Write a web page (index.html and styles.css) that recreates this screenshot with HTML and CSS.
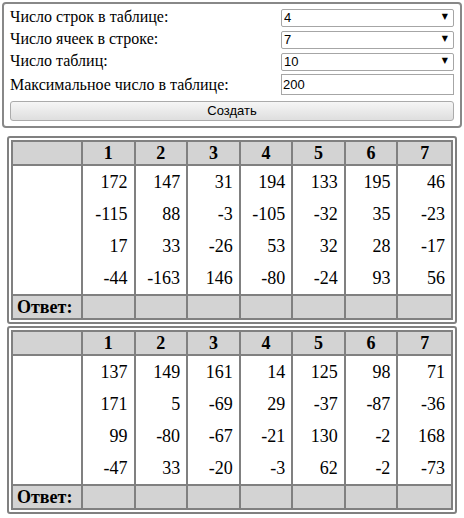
FILE: index.html
```html
<!DOCTYPE html>
<html lang="ru">
<head>
<meta charset="utf-8">
<title>Таблицы</title>
<link rel="stylesheet" href="styles.css">
</head>
<body>
<div class="form-panel">
  <label class="lbl">Число строк в таблице:</label>
  <div class="select-wrap"><select class="sel"><option>4</option></select></div>
  <label class="lbl">Число ячеек в строке:</label>
  <div class="select-wrap"><select class="sel"><option>7</option></select></div>
  <label class="lbl">Число таблиц:</label>
  <div class="select-wrap"><select class="sel"><option>10</option></select></div>
  <label class="lbl">Максимальное число в таблице:</label>
  <input class="num" type="text" value="200">
  <button class="create" type="button">Создать</button>
</div>

<div class="table-panel">
  <table class="grid">
    <thead>
      <tr><th class="first"></th><th>1</th><th>2</th><th>3</th><th>4</th><th>5</th><th>6</th><th class="last">7</th></tr>
    </thead>
    <tbody>
      <tr><td class="first"></td><td>172</td><td>147</td><td>31</td><td>194</td><td>133</td><td>195</td><td class="last">46</td></tr>
      <tr><td class="first"></td><td>-115</td><td>88</td><td>-3</td><td>-105</td><td>-32</td><td>35</td><td class="last">-23</td></tr>
      <tr><td class="first"></td><td>17</td><td>33</td><td>-26</td><td>53</td><td>32</td><td>28</td><td class="last">-17</td></tr>
      <tr><td class="first"></td><td>-44</td><td>-163</td><td>146</td><td>-80</td><td>-24</td><td>93</td><td class="last">56</td></tr>
    </tbody>
    <tfoot>
      <tr><th class="first answer">Ответ:</th><td></td><td></td><td></td><td></td><td></td><td></td><td class="last"></td></tr>
    </tfoot>
  </table>
</div>

<div class="table-panel second">
  <table class="grid">
    <thead>
      <tr><th class="first"></th><th>1</th><th>2</th><th>3</th><th>4</th><th>5</th><th>6</th><th class="last">7</th></tr>
    </thead>
    <tbody>
      <tr><td class="first"></td><td>137</td><td>149</td><td>161</td><td>14</td><td>125</td><td>98</td><td class="last">71</td></tr>
      <tr><td class="first"></td><td>171</td><td>5</td><td>-69</td><td>29</td><td>-37</td><td>-87</td><td class="last">-36</td></tr>
      <tr><td class="first"></td><td>99</td><td>-80</td><td>-67</td><td>-21</td><td>130</td><td>-2</td><td class="last">168</td></tr>
      <tr><td class="first"></td><td>-47</td><td>33</td><td>-20</td><td>-3</td><td>62</td><td>-2</td><td class="last">-73</td></tr>
    </tbody>
    <tfoot>
      <tr><th class="first answer">Ответ:</th><td></td><td></td><td></td><td></td><td></td><td></td><td class="last"></td></tr>
    </tfoot>
  </table>
</div>
</body>
</html>
```

FILE: styles.css
```css
html, body {
  margin: 0;
  padding: 0;
  background: #ffffff;
}

body {
  font-family: "Liberation Serif", "Times New Roman", serif;
  color: #000;
}

.form-panel {
  margin: 2px 2px 0 2px;
  border: 2px solid #888888;
  border-radius: 4px;
  padding: 4px 6px 5px 6px;
  display: grid;
  grid-template-columns: 1fr 173px;
  row-gap: 4px;
  align-items: center;
}

.lbl {
  font-size: 16px;
  line-height: 18px;
  padding-left: 0;
  white-space: nowrap;
}

.select-wrap {
  position: relative;
  height: 18px;
}

.select-wrap::after {
  content: "▼";
  position: absolute;
  right: 6px;
  top: 4px;
  font-family: "DejaVu Sans", sans-serif;
  font-size: 8px;
  line-height: 10px;
  color: #000;
  pointer-events: none;
}

.sel {
  appearance: none;
  -webkit-appearance: none;
  box-sizing: border-box;
  width: 100%;
  height: 18px;
  margin: 0;
  border: 1px solid #a6a6a6;
  border-radius: 2px;
  background: #ffffff;
  padding: 0 0 0 2px;
  font-family: "Liberation Sans", Arial, sans-serif;
  font-size: 13px;
  line-height: 16px;
  color: #000;
}

.num {
  box-sizing: border-box;
  width: 100%;
  height: 21px;
  margin: 0;
  border: 1px solid #a6a6a6;
  border-radius: 0;
  padding: 0 1px;
  font-family: "Liberation Sans", Arial, sans-serif;
  font-size: 13px;
  color: #000;
  background: #fff;
}

.create {
  grid-column: 1 / 3;
  margin-top: 2px;
  box-sizing: border-box;
  width: 100%;
  height: 20px;
  border: 1px solid #ababab;
  border-radius: 3px;
  background: linear-gradient(#f6f6f6, #dedede);
  font-family: "Liberation Sans", Arial, sans-serif;
  font-size: 13px;
  line-height: 16px;
  color: #000;
  padding: 0;
}

.table-panel {
  margin: 8px 7px 0 7px;
  border: 2px solid #808080;
  border-radius: 3px;
  padding: 2px;
}

.table-panel.second {
  margin-top: 2px;
}

.grid {
  width: 100%;
  table-layout: fixed;
  border-collapse: separate;
  border-spacing: 0;
  border: 2px solid #808080;
  font-size: 18px;
}

.grid th,
.grid td {
  padding: 0;
  border-right: 2px solid #808080;
}

.grid .last {
  border-right: none;
}

.grid thead th {
  background: #d3d3d3;
  font-weight: bold;
  text-align: center;
  line-height: 20px;
  padding: 1px 0;
  border-bottom: 2px solid #808080;
}

.grid thead th.first {
  width: 68px;
}

.grid tbody td {
  text-align: right;
  line-height: 20px;
  padding: 6px 6px 6px 0;
}

.grid tfoot th,
.grid tfoot td {
  background: #d3d3d3;
  border-top: 2px solid #808080;
  line-height: 20px;
  padding: 1px 0;
}

.grid tfoot .answer {
  text-align: left;
  padding-left: 4px;
  font-weight: bold;
}
```
